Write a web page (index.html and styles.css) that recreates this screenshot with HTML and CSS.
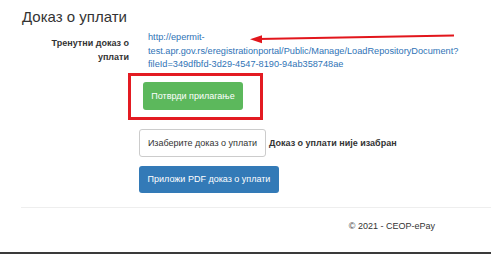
FILE: index.html
```html
<!DOCTYPE html>
<html lang="sr">
<head>
  <meta charset="UTF-8" />
  <title>Доказ о уплати - CEOP-ePay</title>
  <link rel="stylesheet" href="styles.css">
</head>
<body>
  <div class="page">
    <h2 class="title">Доказ о уплати</h2>

    <div class="form-group">
      <label class="control-label">Тренутни доказ о<br>уплати</label>
      <a class="doc-link" href="#">http://epermit-<br>test.apr.gov.rs/eregistrationportal/Public/Manage/LoadRepositoryDocument?<br>fileId=349dfbfd-3d29-4547-8190-94ab358748ae</a>
    </div>

    <!-- red annotation arrow pointing at the link -->
    <svg class="arrow" width="210" height="14" viewBox="0 0 210 14">
      <line x1="206" y1="4.5" x2="10" y2="8" stroke="#e2161c" stroke-width="2" />
      <polygon points="2,8.2 14,4.2 14,12.2" fill="#e2161c" />
    </svg>

    <div class="highlight">
      <button class="btn btn-success">Потврди прилагање</button>
    </div>

    <div class="file-row">
      <span class="file-btn">Изаберите доказ о уплати</span>
      <span class="file-name">Доказ о уплати није изабран</span>
    </div>

    <button class="btn btn-primary">Приложи PDF доказ о уплати</button>

    <hr class="divider">

    <footer>&copy; 2021 - CEOP-ePay</footer>
  </div>
  <div class="window-edge"></div>
</body>
</html>
```

FILE: styles.css
```css
body { margin:0; font-family:"Liberation Sans", Arial, sans-serif; color:#333; background:#fff; height:254px; display:flex; flex-direction:column; overflow:hidden; }
.page { position:relative; padding-left:22px; flex:1; }
.title { margin:7px 0 0 0; font-size:15px; line-height:20px; font-weight:normal; color:#333; }
.form-group { display:flex; margin-top:4px; font-size:9px; line-height:13.5px; }
.control-label { width:107px; flex:none; text-align:right; font-weight:bold; padding-top:6px; }
.doc-link { margin-left:19px; color:#2f73b6; text-decoration:none; font-size:9.2px; }
.arrow { position:absolute; left:248px; top:31px; }
.highlight { width:fit-content; margin:1px 0 0 106px; border:3px solid #e31b22; padding:6px 17px 7px 12px; }
.btn { border:none; border-radius:3px; color:#fff; font-family:inherit; font-size:9px; padding:0; cursor:pointer; }
.btn-success { width:100px; height:28px; background:#5cb85c; }
.file-row { display:flex; align-items:center; margin:9px 0 0 117px; font-size:9px; }
.file-btn { width:127px; height:28px; box-sizing:border-box; border:1px solid #ccc; border-radius:3px; display:flex; align-items:center; justify-content:center; color:#333; }
.file-name { margin-left:3px; font-weight:bold; }
.btn-primary { display:block; margin:9px 0 0 117px; width:140px; height:27px; background:#337ab7; }
.divider { margin:14px 0 0 -1px; border:none; border-top:1px solid #eee; }
footer { text-align:right; padding-right:56px; margin-top:13px; font-size:9px; color:#333; }
.window-edge { height:2px; background:#3a3a3a; }
```
